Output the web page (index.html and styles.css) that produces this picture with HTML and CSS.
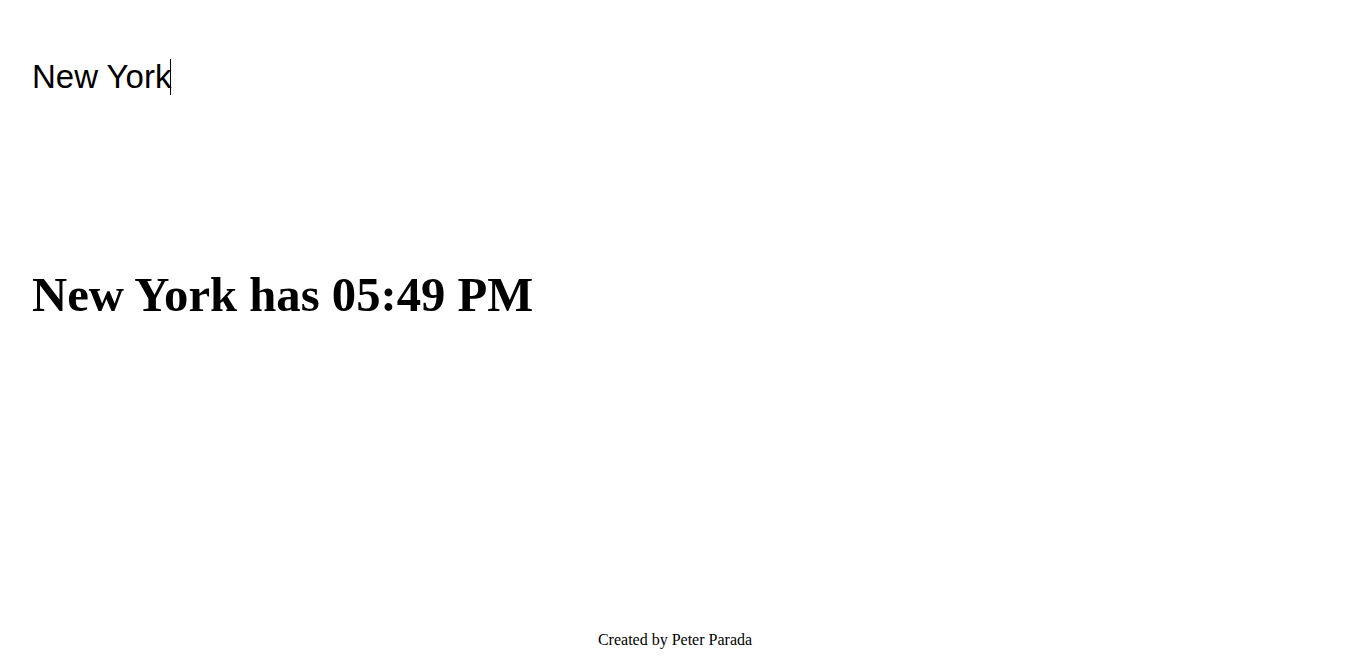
FILE: index.html
```html
<!DOCTYPE html>
<html lang="en">
<head>
<meta charset="utf-8">
<title>World Clock</title>
<link rel="stylesheet" href="styles.css">
</head>
<body>
<div class="page">
  <main class="content">
    <div class="search" role="textbox" aria-label="City">New York<span class="caret"></span></div>
    <h1 class="result">New York has 05:49 PM</h1>
  </main>
  <footer class="footer">Created by Peter Parada</footer>
</div>
</body>
</html>
```
FILE: styles.css
```css
html, body {
  margin: 0;
  padding: 0;
  background: #ffffff;
  color: #000000;
}

.page {
  min-height: 100vh;
  box-sizing: border-box;
  display: flex;
  flex-direction: column;
  font-family: "Liberation Serif", "Times New Roman", serif;
}

.content {
  padding: 58px 32px 0 32px;
}

.search {
  font-family: "Liberation Sans", Arial, sans-serif;
  font-size: 33px;
  line-height: 37px;
  height: 37px;
  display: flex;
  align-items: center;
}

.caret {
  display: inline-block;
  width: 1px;
  height: 36px;
  background: #000000;
  margin-left: -1px;
}

.result {
  font-family: "Liberation Serif", "Times New Roman", serif;
  font-weight: bold;
  font-size: 48.7px;
  line-height: 55px;
  margin: 173px 0 0 0;
}

.footer {
  margin-top: auto;
  padding: 0 13px 15px 0;
  text-align: center;
  font-size: 16px;
  line-height: 18px;
}
```
